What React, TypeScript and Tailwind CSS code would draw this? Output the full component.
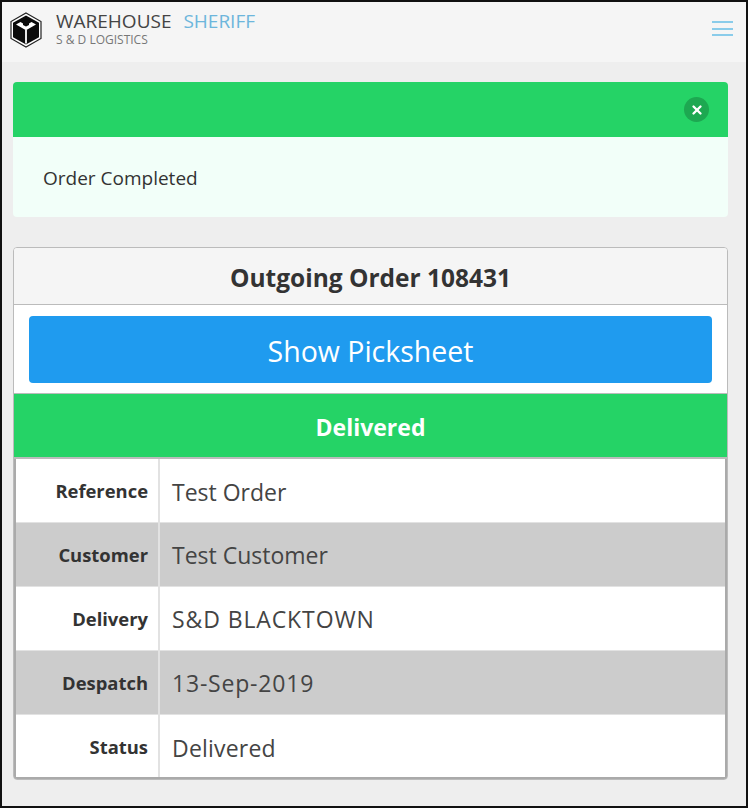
import { X } from "lucide-react";

const rows = [
  { label: "Reference", value: "Test Order", spacing: "" },
  { label: "Customer", value: "Test Customer", spacing: "" },
  { label: "Delivery", value: "S&D BLACKTOWN", spacing: "tracking-[0.9px]" },
  { label: "Despatch", value: "13-Sep-2019", spacing: "tracking-[0.8px]" },
  { label: "Status", value: "Delivered", spacing: "tracking-[0.2px]" },
];

const Logo = () => (
  <svg width="32" height="36" viewBox="0 0 32 36">
    <path d="M16 1 L31 9.5 L31 26.5 L16 35 L1 26.5 L1 9.5 Z" fill="#fff" stroke="#222" strokeWidth="1.2" />
    <path d="M16 3.5 L29 10.8 L29 25.2 L16 32.5 L3 25.2 L3 10.8 Z" fill="#0b0b0b" />
    {/* top face */}
    <path d="M16 6.5 L11 9.5 L8 11.5 L16 16 L24 11.5 L21 9.5 Z" fill="#0b0b0b" />
    <path d="M6 12.5 L16 18.2 L26 12.5 L21.5 10 L19 11.5 L19 13 L16 14.5 L13 13 L13 11.5 L10.5 10 Z" fill="#fff" />
    <path d="M16 18 L16 31.5" stroke="#fff" strokeWidth="1.8" fill="none" />
  </svg>
);

export default function App() {
  return (
    <div className="w-[748px] h-[808px] bg-[#eeeeee] border-2 border-[#111] font-['Open_Sans',sans-serif] text-[#333] overflow-hidden">
      <header className="h-[60px] bg-[#f5f5f5] flex justify-between pl-[8px] pr-[13px]">
        <div className="flex items-start gap-[14px]">
          <div className="mt-[10px]">
            <Logo />
          </div>
          <div className="pt-[6px]">
            <div className="text-[19px] leading-[26px] text-[#444] whitespace-nowrap">
              WAREHOUSE <span className="ml-[7px] text-[#6db6dc]">SHERIFF</span>
            </div>
            <div className="text-[12px] leading-[12px] text-[#777]">S &amp; D LOGISTICS</div>
          </div>
        </div>
        <div className="mt-[19px] flex flex-col gap-[4.5px]">
          <div className="w-[21px] h-[2px] bg-[#8accea]" />
          <div className="w-[21px] h-[2px] bg-[#8accea]" />
          <div className="w-[21px] h-[2px] bg-[#8accea]" />
        </div>
      </header>

      <main className="pl-[11px] pr-[18px] pt-[20px]">
        <section className="rounded-[4px] overflow-hidden">
          <div className="h-[55px] bg-[#25d366] flex items-center justify-end pr-[19px]">
            <span className="w-[25px] h-[25px] rounded-full bg-[#1da851] flex items-center justify-center">
              <X className="text-white" size={14} strokeWidth={4} />
            </span>
          </div>
          <div className="h-[80px] bg-[#f2fff9] flex items-center pl-[30px] pt-[2px] text-[19px]">Order Completed</div>
        </section>

        <section className="mt-[30px] border border-[#bbb] rounded-[4px] overflow-hidden bg-white">
          <div className="h-[57px] bg-[#f5f5f5] border-b border-[#bbb] flex items-center justify-center pt-[4px] text-[24.5px] font-bold">
            Outgoing Order 108431
          </div>
          <div className="h-[88px] px-[15px] pt-[11px]">
            <button className="w-full h-[67px] rounded-[4px] bg-[#1f9bef] text-white text-[28.5px] pt-[4px]">Show Picksheet</button>
          </div>
          <div className="h-[66px] bg-[#25d366] border-t border-b-2 border-[#bbb] flex items-center justify-center pt-[4px] text-white text-[23px] font-bold">
            Delivered
          </div>
          <div className="border-2 border-t-0 border-[#aaa]">
            {rows.map((row, i) => {
              const outer = i === 0 || i === 4;
              return (
                <div
                  key={row.label}
                  className={`flex ${outer ? "h-[63px]" : "h-[64px]"} ${i % 2 === 1 ? "bg-[#cccccc]" : "bg-white"} ${i > 0 ? "border-t border-[#e2e2e2]" : ""}`}
                >
                  <div className={`w-[144px] shrink-0 border-r-2 border-[#e2e2e2] flex items-center justify-end pr-[10px] text-[18.4px] font-bold ${i === 4 ? "pt-[2px]" : ""}`}>
                    {row.label}
                  </div>
                  <div className={`flex items-center pl-[12px] text-[23px] text-[#444] ${row.spacing} ${outer ? "pt-[4px]" : "pt-[2px]"}`}>{row.value}</div>
                </div>
              );
            })}
          </div>
        </section>
      </main>
    </div>
  );
}
